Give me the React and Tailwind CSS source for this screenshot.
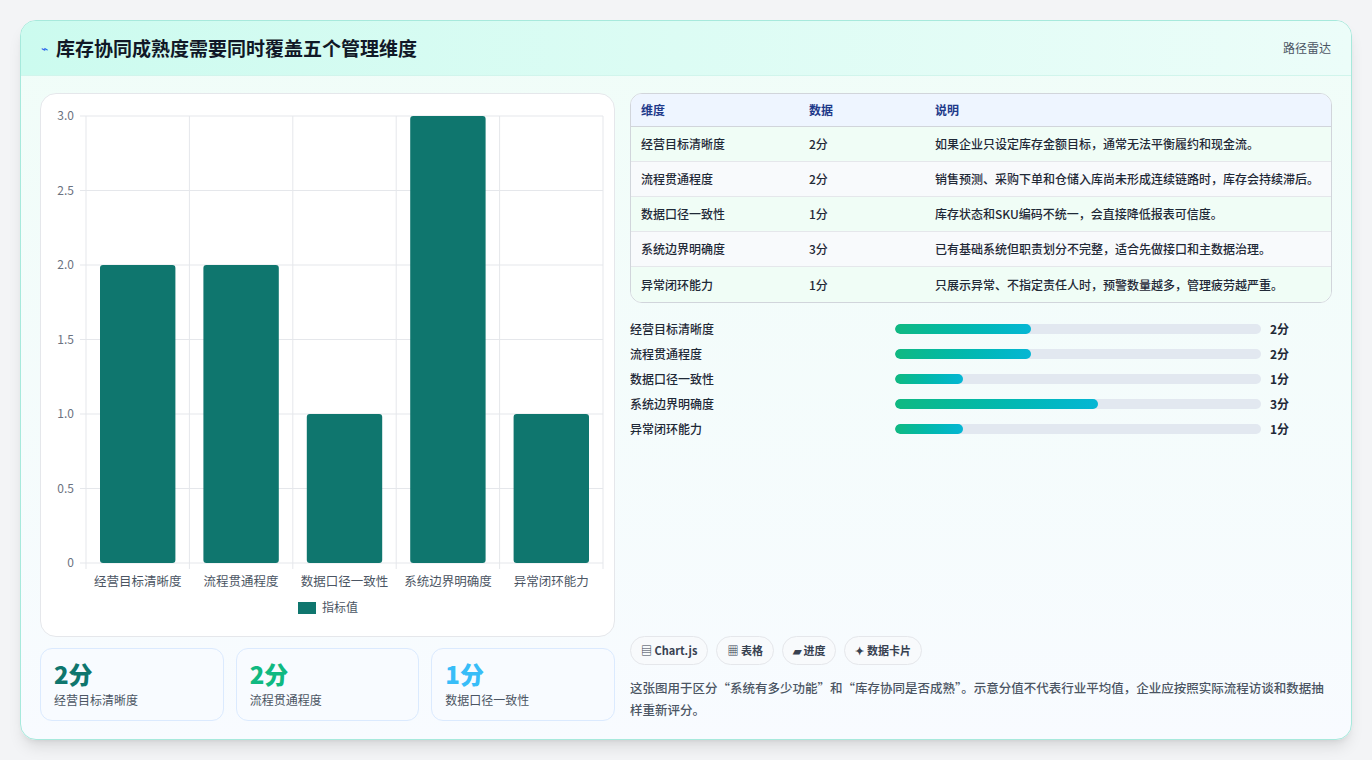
import React from "react";

const rows = [
  ["经营目标清晰度", 2, "如果企业只设定库存金额目标，通常无法平衡履约和现金流。"],
  ["流程贯通程度", 2, "销售预测、采购下单和仓储入库尚未形成连续链路时，库存会持续滞后。"],
  ["数据口径一致性", 1, "库存状态和SKU编码不统一，会直接降低报表可信度。"],
  ["系统边界明确度", 3, "已有基础系统但职责划分不完整，适合先做接口和主数据治理。"],
  ["异常闭环能力", 1, "只展示异常、不指定责任人时，预警数量越多，管理疲劳越严重。"],
];

function Chart() {
  const x0 = 45, x1 = 562, y0 = 22, yb = 469;
  const h = yb - y0;
  const cw = (x1 - x0) / 5;
  const ticks = [0, 0.5, 1, 1.5, 2, 2.5, 3];
  return (
    <svg width="574" height="543" style={{ fontFamily: "'Noto Sans CJK SC', sans-serif" }}>
      {ticks.map((t) => {
        const y = yb - (t / 3) * h;
        return (
          <g key={t}>
            <line x1={x0 - 6} x2={x1} y1={y} y2={y} stroke="#e5e7eb" />
            <text x={x0 - 12} y={y + 4} textAnchor="end" fontSize="12" fill="#6b7280">{t === 0 ? "0" : t.toFixed(1)}</text>
          </g>
        );
      })}
      {[0, 1, 2, 3, 4, 5].map((i) => (
        <line key={i} x1={x0 + i * cw} x2={x0 + i * cw} y1={y0} y2={yb + 6} stroke="#e5e7eb" />
      ))}
      {rows.map((r, i) => {
        const bh = (r[1] / 3) * h;
        return (
          <g key={i}>
            <rect x={x0 + i * cw + 14} y={yb - bh} width={cw - 28} height={bh} rx="3" fill="#0f766e" />
            <text x={x0 + i * cw + cw / 2} y={yb + 23} textAnchor="middle" fontSize="12.5" fill="#4b5563">{r[0]}</text>
          </g>
        );
      })}
      <rect x="257" y="508" width="18" height="12" fill="#0f766e" />
      <text x="281" y="518" fontSize="12" fill="#4b5563">指标值</text>
    </svg>
  );
}

export default function App() {
  return (
    <div className="w-[1372px] h-[760px] bg-[#f3f4f6] pt-5 px-5" style={{ fontFamily: "'Noto Sans CJK SC', 'Noto Sans', sans-serif" }}>
      <div className="h-[720px] rounded-2xl border border-[#a7e9dc] bg-gradient-to-b from-[#f0fdf8] to-[#f8fbff] shadow-lg overflow-hidden flex flex-col">
        <div className="h-[55px] shrink-0 flex items-center justify-between px-5 bg-gradient-to-r from-[#ccfbef] to-[#ecfdf9] border-b border-[#d1f5ec]">
          <div className="flex items-center gap-2">
            <span className="text-[12px] text-[#2563eb]">⌁</span>
            <span className="text-[19px] font-bold text-[#111827]">库存协同成熟度需要同时覆盖五个管理维度</span>
          </div>
          <span className="text-[12px] text-[#4b5563]">路径雷达</span>
        </div>
        <div className="flex-1 flex gap-[15px] pl-[19px] pr-[19px] pt-[17px] pb-[18px]">
          <div className="w-[575px] flex flex-col gap-[11px]">
            <div className="h-[544px] bg-white rounded-2xl border border-[#e5e7eb]"><Chart /></div>
            <div className="grid grid-cols-3 gap-3 flex-1">
              {[["2分", "text-[#0f766e]"], ["2分", "text-[#10b981]"], ["1分", "text-[#38bdf8]"]].map((s, i) => (
                <div key={i} className="rounded-xl border border-[#dbeafe] bg-[#f8fbff] px-[13px] pt-[10px]">
                  <div className={`text-[24px] font-extrabold leading-[30px] ${s[1]}`}>{s[0]}</div>
                  <div className="text-[12px] text-[#4b5563] mt-0.5">{rows[i][0]}</div>
                </div>
              ))}
            </div>
          </div>
          <div className="flex-1 flex flex-col justify-between">
            <div>
              <div className="rounded-xl border border-[#d1d5db] overflow-hidden bg-white text-[12px]">
                <div className="grid grid-cols-[168px_126px_1fr] h-[33px] items-center px-[10px] bg-[#eef5ff] text-[#1e3a8a] font-semibold border-b border-[#d1d5db]">
                  <span>维度</span><span>数据</span><span>说明</span>
                </div>
                {rows.map((r, i) => (
                  <div key={i} className={`grid grid-cols-[168px_126px_1fr] h-[35px] items-center px-[10px] text-[#1f2937] font-medium ${i % 2 === 0 ? "bg-[#f0fdf6]" : "bg-[#f8fafc]"} ${i < 4 ? "border-b border-[#e5e7eb]" : ""}`}>
                    <span>{r[0]}</span><span>{r[1]}分</span><span>{r[2]}</span>
                  </div>
                ))}
              </div>
              <div className="mt-[13px] flex flex-col">
                {rows.map((r, i) => (
                  <div key={i} className="h-[25px] flex items-center text-[12px] text-[#1f2937] font-medium">
                    <span className="w-[265px]">{r[0]}</span>
                    <div className="w-[366px] h-[10px] rounded-full bg-[#e2e8f0] overflow-hidden">
                      <div className="h-full rounded-full bg-gradient-to-r from-[#10b981] to-[#06b6d4]" style={{ width: `${(r[1] / 5.4) * 100}%` }} />
                    </div>
                    <span className="ml-[9px] font-bold">{r[1]}分</span>
                  </div>
                ))}
              </div>
            </div>
            <div>
              <div className="flex gap-2 mb-[12px]">
                {["▤ Chart.js", "▦ 表格", "▰ 进度", "✦ 数据卡片"].map((p) => (
                  <span key={p} className="h-[29px] px-[10px] flex items-center rounded-full border border-[#e5e7eb] bg-[#f8fafc] text-[11px] font-semibold text-[#374151]">{p}</span>
                ))}
              </div>
              <p className="text-[12.5px] leading-[22px] text-[#4b5563] font-medium">这张图用于区分“系统有多少功能”和“库存协同是否成熟”。示意分值不代表行业平均值，企业应按照实际流程访谈和数据抽样重新评分。</p>
            </div>
          </div>
        </div>
      </div>
    </div>
  );
}
